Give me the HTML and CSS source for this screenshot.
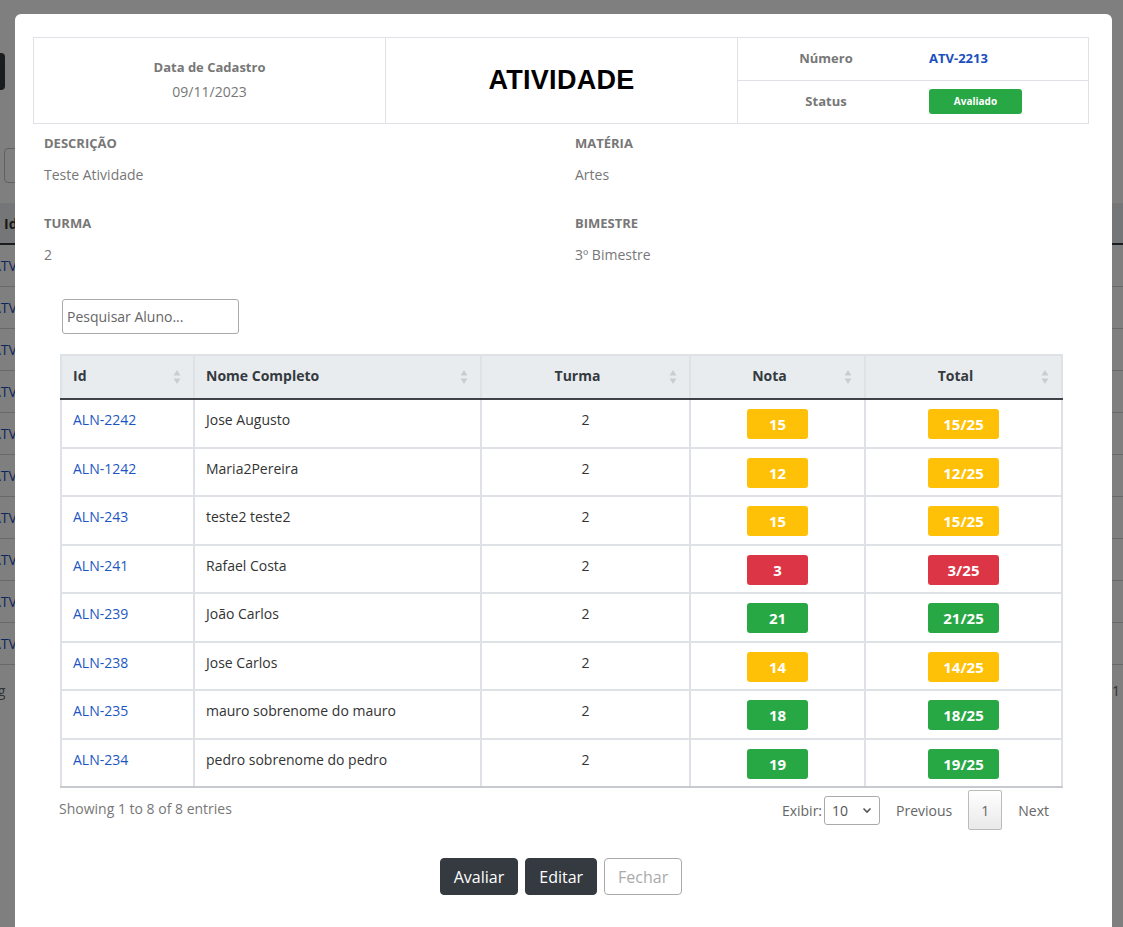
FILE: index.html
```html
<!DOCTYPE html>
<html lang="pt-BR">
<head>
<meta charset="utf-8">
<title>Atividade</title>
<link rel="stylesheet" href="styles.css">
</head>
<body>
<div class="page">
  <div class="page-btn"></div>
  <div class="page-input"></div>
  <table class="page-table">
    <thead><tr><th class="pc1">Id</th><th></th><th class="pclast"></th></tr></thead>
    <tbody>
      <tr><td class="pc1">ATV-2213</td><td></td><td class="pclast"></td></tr>
      <tr><td class="pc1">ATV-2212</td><td></td><td class="pclast"></td></tr>
      <tr><td class="pc1">ATV-2211</td><td></td><td class="pclast"></td></tr>
      <tr><td class="pc1">ATV-2210</td><td></td><td class="pclast"></td></tr>
      <tr><td class="pc1">ATV-2209</td><td></td><td class="pclast"></td></tr>
      <tr><td class="pc1">ATV-2208</td><td></td><td class="pclast"></td></tr>
      <tr><td class="pc1">ATV-2207</td><td></td><td class="pclast"></td></tr>
      <tr><td class="pc1">ATV-2206</td><td></td><td class="pclast"></td></tr>
      <tr><td class="pc1">ATV-2205</td><td></td><td class="pclast"></td></tr>
      <tr><td class="pc1">ATV-2204</td><td></td><td class="pclast"></td></tr>
    </tbody>
  </table>
  <div class="page-foot"><span class="pf-left">Showing</span><span class="pf-right">1</span></div>
</div>
<div class="overlay"></div>

<div class="modal">
  <div class="head">
    <div class="head-cell date">
      <div class="date-lbl">Data de Cadastro</div>
      <div class="date-val">09/11/2023</div>
    </div>
    <div class="head-cell title">ATIVIDADE</div>
    <div class="head-cell meta">
      <div class="meta-row">
        <div class="meta-lbl">Número</div>
        <div class="meta-val num">ATV-2213</div>
      </div>
      <div class="meta-row meta-row2">
        <div class="meta-lbl">Status</div>
        <div class="meta-val"><span class="status">Avaliado</span></div>
      </div>
    </div>
  </div>

  <div class="info">
    <div class="field"><div class="f-lbl">DESCRIÇÃO</div><div class="f-val">Teste Atividade</div></div>
    <div class="field"><div class="f-lbl">MATÉRIA</div><div class="f-val">Artes</div></div>
    <div class="field"><div class="f-lbl">TURMA</div><div class="f-val">2</div></div>
    <div class="field"><div class="f-lbl">BIMESTRE</div><div class="f-val">3º Bimestre</div></div>
  </div>

  <input class="search" type="text" placeholder="Pesquisar Aluno...">

  <table class="grid">
    <colgroup>
      <col class="c-id"><col class="c-nome"><col class="c-turma"><col class="c-nota"><col class="c-total">
    </colgroup>
    <thead>
      <tr>
        <th>Id<span class="sort"><svg width="8" height="16" viewBox="0 0 8 16"><path d="M4 1 L7.5 6.5 H0.5 Z" fill="#c9cdd2"/><path d="M4 15 L7.5 9.5 H0.5 Z" fill="#c9cdd2"/></svg></span></th>
        <th>Nome Completo<span class="sort"><svg width="8" height="16" viewBox="0 0 8 16"><path d="M4 1 L7.5 6.5 H0.5 Z" fill="#c9cdd2"/><path d="M4 15 L7.5 9.5 H0.5 Z" fill="#c9cdd2"/></svg></span></th>
        <th class="ctr">Turma<span class="sort"><svg width="8" height="16" viewBox="0 0 8 16"><path d="M4 1 L7.5 6.5 H0.5 Z" fill="#c9cdd2"/><path d="M4 15 L7.5 9.5 H0.5 Z" fill="#c9cdd2"/></svg></span></th>
        <th class="ctr">Nota<span class="sort"><svg width="8" height="16" viewBox="0 0 8 16"><path d="M4 1 L7.5 6.5 H0.5 Z" fill="#c9cdd2"/><path d="M4 15 L7.5 9.5 H0.5 Z" fill="#c9cdd2"/></svg></span></th>
        <th class="ctr">Total<span class="sort"><svg width="8" height="16" viewBox="0 0 8 16"><path d="M4 1 L7.5 6.5 H0.5 Z" fill="#c9cdd2"/><path d="M4 15 L7.5 9.5 H0.5 Z" fill="#c9cdd2"/></svg></span></th>
      </tr>
    </thead>
    <tbody>
      <tr><td class="lnk">ALN-2242</td><td>Jose Augusto</td><td class="ctr">2</td><td class="ctr"><span class="badge nota warn">15</span></td><td class="ctr"><span class="badge total warn">15/25</span></td></tr>
      <tr><td class="lnk">ALN-1242</td><td>Maria2Pereira</td><td class="ctr">2</td><td class="ctr"><span class="badge nota warn">12</span></td><td class="ctr"><span class="badge total warn">12/25</span></td></tr>
      <tr><td class="lnk">ALN-243</td><td>teste2 teste2</td><td class="ctr">2</td><td class="ctr"><span class="badge nota warn">15</span></td><td class="ctr"><span class="badge total warn">15/25</span></td></tr>
      <tr><td class="lnk">ALN-241</td><td>Rafael Costa</td><td class="ctr">2</td><td class="ctr"><span class="badge nota bad">3</span></td><td class="ctr"><span class="badge total bad">3/25</span></td></tr>
      <tr><td class="lnk">ALN-239</td><td>João Carlos</td><td class="ctr">2</td><td class="ctr"><span class="badge nota ok">21</span></td><td class="ctr"><span class="badge total ok">21/25</span></td></tr>
      <tr><td class="lnk">ALN-238</td><td>Jose Carlos</td><td class="ctr">2</td><td class="ctr"><span class="badge nota warn">14</span></td><td class="ctr"><span class="badge total warn">14/25</span></td></tr>
      <tr><td class="lnk">ALN-235</td><td>mauro sobrenome do mauro</td><td class="ctr">2</td><td class="ctr"><span class="badge nota ok">18</span></td><td class="ctr"><span class="badge total ok">18/25</span></td></tr>
      <tr><td class="lnk">ALN-234</td><td>pedro sobrenome do pedro</td><td class="ctr">2</td><td class="ctr"><span class="badge nota ok">19</span></td><td class="ctr"><span class="badge total ok">19/25</span></td></tr>
    </tbody>
  </table>

  <div class="tfoot">
    <div class="info-text">Showing 1 to 8 of 8 entries</div>
    <div class="pager">
      <span class="exibir">Exibir:</span>
      <span class="select">10<svg class="chev" width="10" height="7" viewBox="0 0 10 7"><path d="M1.5 1.5 L5 5 L8.5 1.5" fill="none" stroke="#555" stroke-width="1.6"/></svg></span>
      <span class="pg">Previous</span>
      <span class="pg-box">1</span>
      <span class="pg">Next</span>
    </div>
  </div>

  <div class="actions">
    <button class="btn dark">Avaliar</button>
    <button class="btn dark">Editar</button>
    <button class="btn outline">Fechar</button>
  </div>
</div>
</body>
</html>
```

FILE: styles.css
```css
html, body {
  margin: 0;
  padding: 0;
  height: 927px;
  overflow: hidden;
  background: #fff;
  font-family: "Open Sans", "Noto Sans", sans-serif;
}

/* ---------- page behind the modal ---------- */
.page {
  width: 1123px;
  height: 927px;
  overflow: hidden;
}
.page-btn {
  margin: 53px 0 0 -50px;
  width: 55px;
  height: 37px;
  background: #343a40;
  border-radius: 4px;
}
.page-input {
  margin: 58px 0 0 4px;
  width: 200px;
  height: 33px;
  border: 1px solid #bfc3c7;
  border-radius: 4px;
}
.page-table {
  margin: 20px 0 0 -12px;
  width: 1152px;
  border-collapse: collapse;
  font-size: 14px;
}
.page-table th {
  height: 40px;
  background: #e9ecef;
  border-bottom: 2px solid #343a40;
  text-align: left;
  padding: 0 12px;
  color: #333;
}
.page-table td {
  height: 41px;
  padding: 0 12px;
  border-bottom: 1px solid #cfd3d7;
  color: #1d4fb8;
}
.page-table th.pc1 { width: 80px; padding-left: 16px; }
.page-table td.pc1 { width: 80px; padding-left: 4px; }
.page-table .pclast { width: 20px; border-left: 1px solid #cfd3d7; }
.page-foot {
  display: flex;
  justify-content: space-between;
  margin: 16px 0 0 -50px;
  width: 1170px;
  font-size: 14px;
  color: #666;
}

.overlay {
  position: fixed;
  inset: 0;
  background: rgba(0, 0, 0, 0.5);
}

/* ---------- modal ---------- */
.modal {
  position: absolute;
  left: 15px;
  top: 14px;
  width: 1097px;
  height: 950px;
  box-sizing: border-box;
  padding: 23px 23px 0 18px;
  background: #fff;
  border-radius: 6px;
}

.head {
  display: grid;
  grid-template-columns: 351px 352px 1fr;
  height: 87px;
  box-sizing: border-box;
  border: 1px solid #dee2e6;
}
.head-cell + .head-cell {
  border-left: 1px solid #dee2e6;
}
.date {
  display: flex;
  flex-direction: column;
  align-items: center;
  justify-content: center;
  gap: 5px;
  padding-bottom: 2px;
}
.date-lbl {
  font-size: 13px;
  font-weight: 700;
  line-height: 20px;
  color: #777;
}
.date-val {
  font-size: 14px;
  line-height: 20px;
  color: #777;
}
.title {
  display: flex;
  align-items: center;
  justify-content: center;
  font-family: "Liberation Sans", Arial, sans-serif;
  font-size: 27px;
  font-weight: 700;
  color: #000;
  letter-spacing: 0.3px;
}
.meta {
  display: grid;
  grid-template-rows: 42px 1fr;
}
.meta-row {
  display: grid;
  grid-template-columns: 176px 1fr;
  align-items: center;
}
.meta-row > div {
  margin-top: -2px;
}
.meta-row2 {
  border-top: 1px solid #dee2e6;
}
.meta-lbl {
  text-align: center;
  font-size: 13px;
  font-weight: 700;
  color: #777;
}
.meta-val {
  padding-left: 15px;
}
.num {
  font-size: 13px;
  font-weight: 700;
  color: #1a4fbd;
}
.status {
  display: block;
  width: 93px;
  height: 25px;
  line-height: 25px;
  text-align: center;
  background: #28a745;
  color: #fff;
  font-size: 10px;
  font-weight: 700;
  border-radius: 3px;
}

/* ---------- info ---------- */
.info {
  display: grid;
  grid-template-columns: 531px 1fr;
  padding-left: 11px;
  margin-top: 9px;
}
.field {
  height: 80px;
}
.f-lbl {
  font-size: 13px;
  font-weight: 700;
  line-height: 20px;
  color: #777;
}
.f-val {
  margin-top: 12px;
  font-size: 14px;
  line-height: 20px;
  color: #777;
}

.search {
  display: block;
  margin: 6px 0 0 29px;
  width: 177px;
  height: 35px;
  box-sizing: border-box;
  border: 1px solid #aaa;
  border-radius: 3px;
  padding: 0 4px;
  font-family: inherit;
  font-size: 14px;
  color: #333;
}
.search::placeholder {
  color: #666;
}

/* ---------- table ---------- */
.grid {
  margin: 20px 0 0 27px;
  width: 1001px;
  border-collapse: collapse;
  table-layout: fixed;
  font-size: 14px;
}
.c-id { width: 133px; }
.c-nome { width: 287px; }
.c-turma { width: 209px; }
.c-nota { width: 175px; }
.c-total { width: 197px; }

.grid th {
  position: relative;
  height: 44px;
  padding: 0 27px 4px 11px;
  box-sizing: border-box;
  background: #e9ecef;
  border: 2px solid #dee2e6;
  border-bottom: 2px solid #3d4349;
  text-align: left;
  font-weight: 700;
  color: #343a40;
}
.grid th.ctr {
  text-align: center;
}
.sort {
  position: absolute;
  right: 12px;
  top: 13px;
  line-height: 0;
}
.grid td {
  padding: 9px 11px 7.5px;
  border: 2px solid #dee2e6;
  vertical-align: top;
  line-height: 20px;
  color: #333;
}
.grid td:nth-child(-n+3) {
  padding-top: 10px;
  padding-bottom: 6.5px;
}
.grid tbody tr:last-child td {
  border-bottom-color: #c6cacf;
}
.grid td.ctr {
  text-align: center;
}
.grid td.lnk {
  color: #1d56c4;
}
.badge {
  display: inline-block;
  height: 30px;
  line-height: 30px;
  border-radius: 3px;
  color: #fff;
  font-size: 15px;
  font-weight: 700;
  text-align: center;
  vertical-align: top;
}
.badge.nota { width: 61px; }
.badge.total { width: 71px; }
.warn { background: #ffc107; }
.bad { background: #dc3545; }
.ok { background: #28a745; }

/* ---------- table footer ---------- */
.tfoot {
  display: flex;
  justify-content: space-between;
  align-items: center;
  margin-left: 26px;
  width: 990px;
  height: 44px;
  padding-right: 13px;
  font-size: 14px;
  color: #777;
}
.info-text {
  margin-top: -4px;
}
.pager {
  display: flex;
  align-items: center;
  color: #666;
}
.exibir {
  margin-right: 2px;
}
.select {
  display: flex;
  align-items: center;
  justify-content: space-between;
  width: 56px;
  height: 29px;
  box-sizing: border-box;
  padding: 0 7px 0 7px;
  border: 1px solid #aaa;
  border-radius: 3px;
  color: #555;
  margin-right: 16px;
}
.pg {
  margin-right: 16px;
}
.pg:last-child {
  margin-right: 0;
}
.pg-box {
  display: flex;
  align-items: center;
  justify-content: center;
  width: 34px;
  height: 40px;
  box-sizing: border-box;
  border: 1px solid #bbb;
  border-radius: 2px;
  background: linear-gradient(#fff, #e9e9e9);
  color: #666;
  margin-right: 16px;
}

/* ---------- actions ---------- */
.actions {
  display: flex;
  justify-content: center;
  gap: 7px;
  margin-top: 26px;
}
.btn {
  height: 37px;
  padding: 0 13px;
  border-radius: 4px;
  font-family: inherit;
  font-size: 16px;
  font-weight: 500;
  cursor: pointer;
}
.btn.dark {
  background: #343a40;
  border: 1px solid #343a40;
  color: #fff;
}
.btn.outline {
  background: #fff;
  border: 1px solid #aaa;
  color: #aaa;
}
```
